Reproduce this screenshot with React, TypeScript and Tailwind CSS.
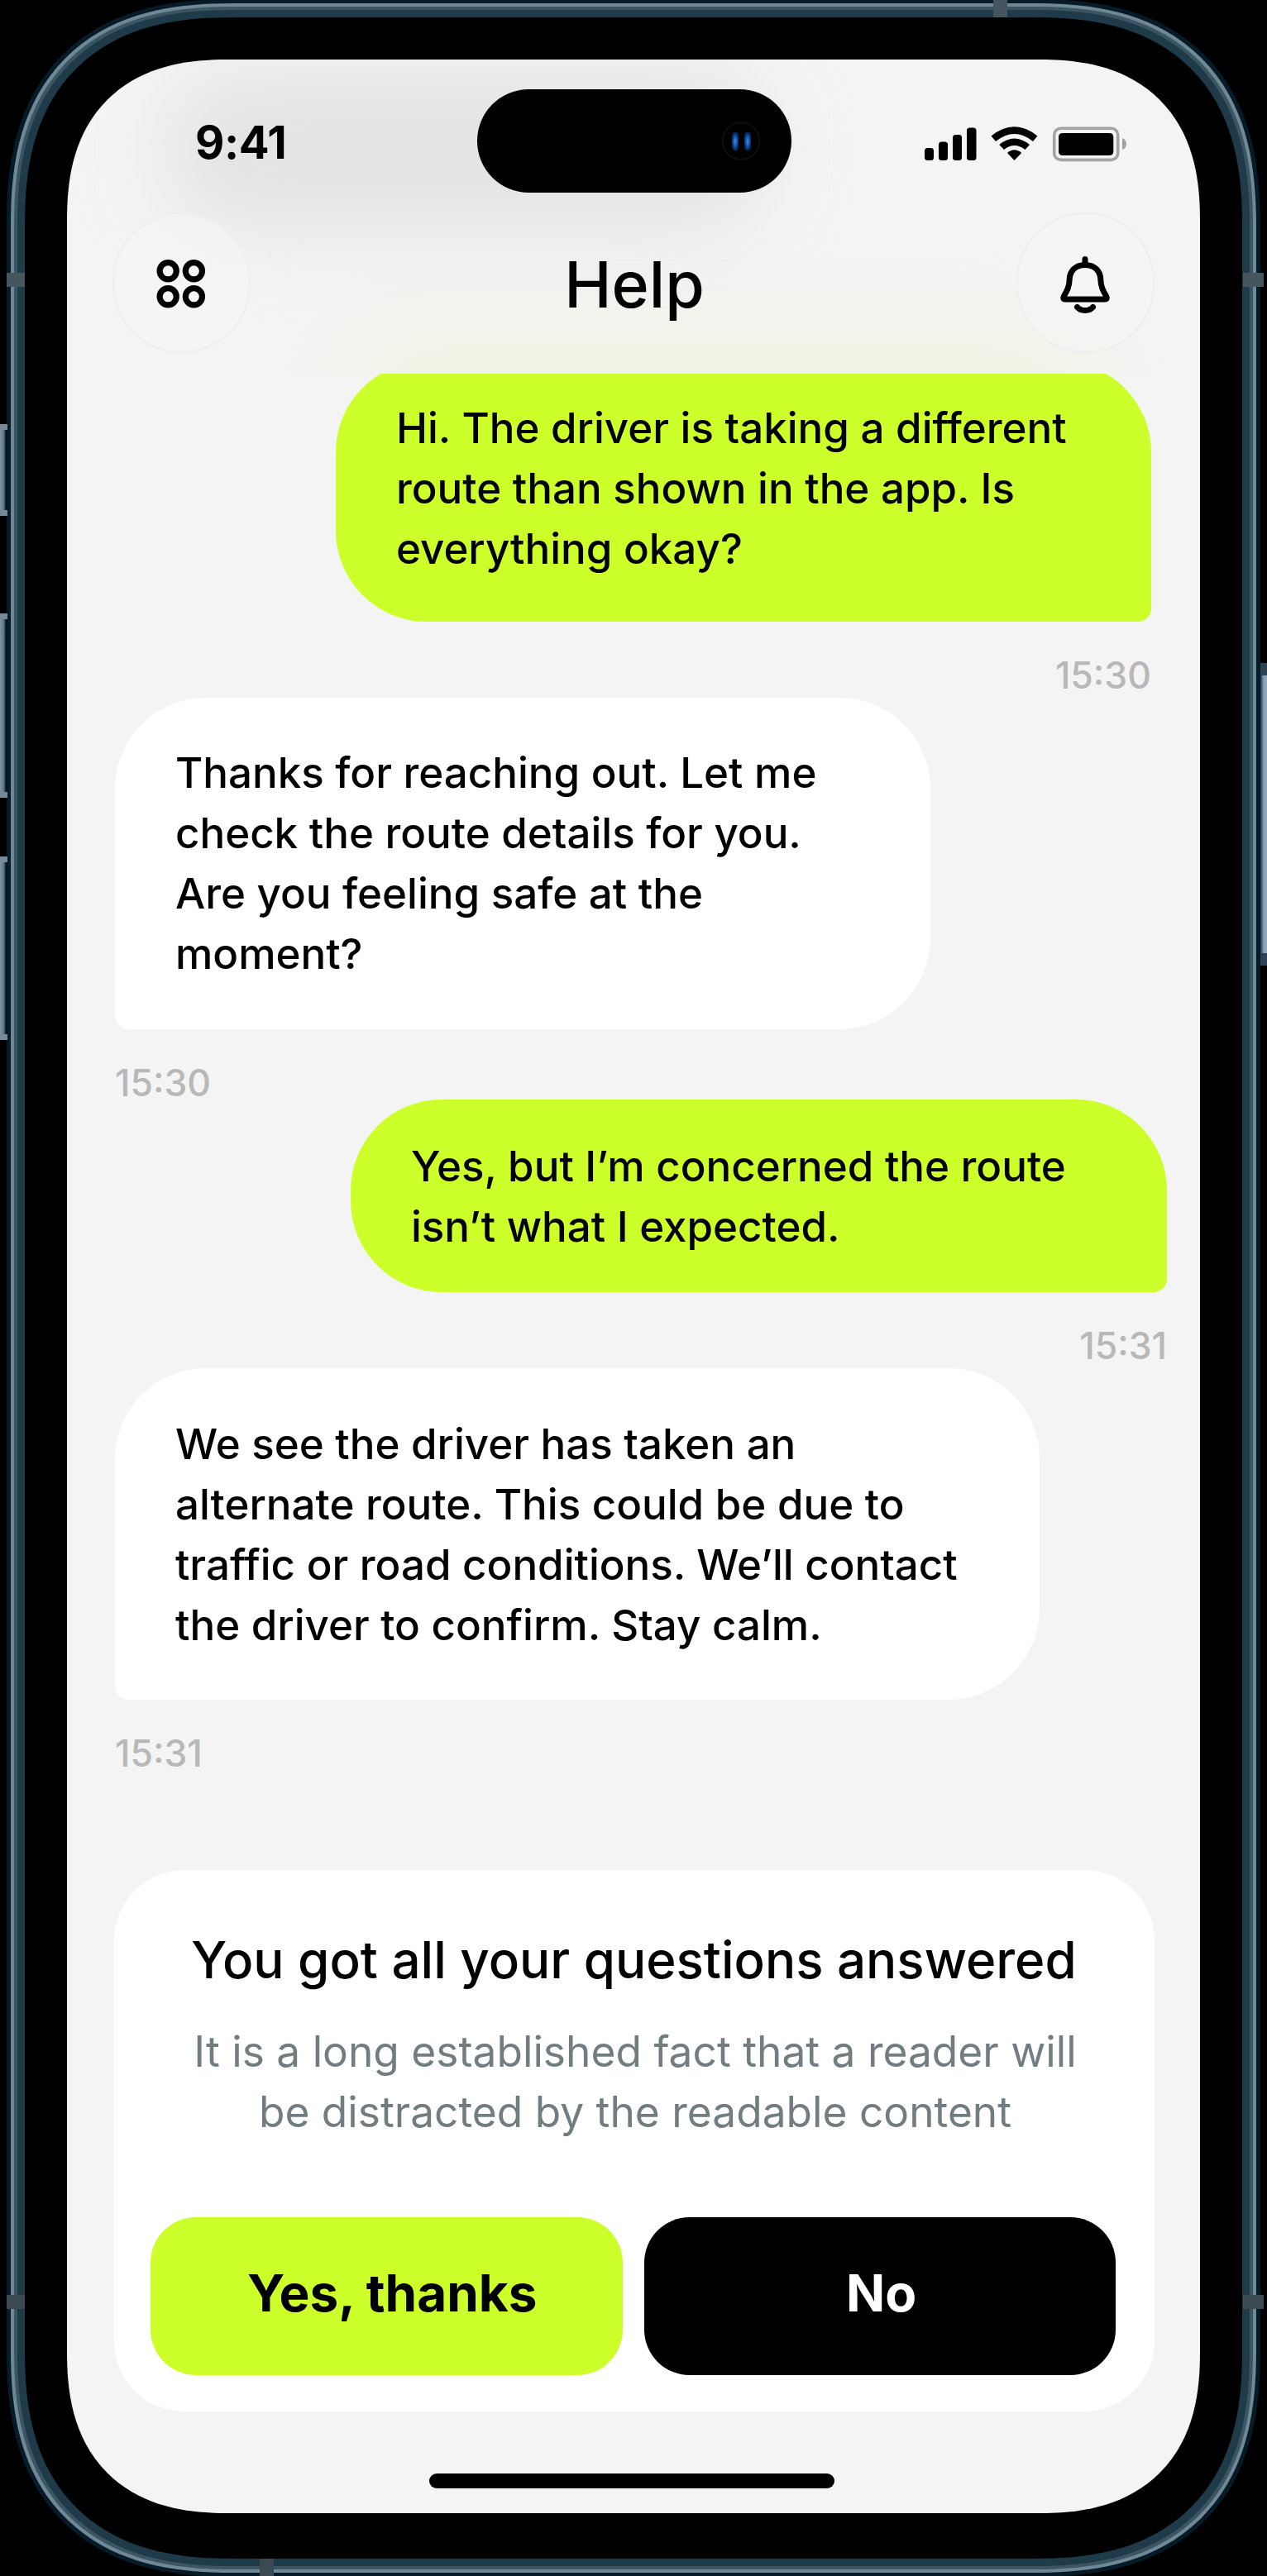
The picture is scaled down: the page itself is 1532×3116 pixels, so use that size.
import React from "react";

type Message = {
  side: "in" | "out";
  lines: string[];
  time: string;
  row: string;
  bubble: string;
};

const chat: Message[] = [
  {
    side: "out",
    lines: ["Hi. The driver is taking a different", "route than shown in the app. Is", "everything okay?"],
    time: "15:30",
    row: "-mt-[15px] pr-[59px] items-end",
    bubble: "w-[986px] h-[315px] pt-[44px]",
  },
  {
    side: "in",
    lines: ["Thanks for reaching out. Let me", "check the route details for you.", "Are you feeling safe at the", "moment?"],
    time: "15:30",
    row: "mt-[3px] pl-[58px] items-start",
    bubble: "w-[986px] h-[401px] pt-[54px]",
  },
  {
    side: "out",
    lines: ["Yes, but I’m concerned the route", "isn’t what I expected."],
    time: "15:31",
    row: "-mt-[4px] pr-[40px] items-end",
    bubble: "w-[987px] h-[233px] pt-[44px]",
  },
  {
    side: "in",
    lines: ["We see the driver has taken an", "alternate route. This could be due to", "traffic or road conditions. We’ll contact", "the driver to confirm. Stay calm."],
    time: "15:31",
    row: "mt-[3px] pl-[58px] items-start",
    bubble: "w-[1118px] h-[401px] pt-[55px]",
  },
];

function StatusIcons() {
  return (
    <svg width="256" height="52" viewBox="1113 148 256 52">
      <rect x="1118" y="179" width="11" height="15" rx="3.5" />
      <rect x="1135" y="171.5" width="11" height="22.5" rx="3.5" />
      <rect x="1152" y="163" width="11" height="31" rx="3.5" />
      <rect x="1169" y="154.5" width="11.5" height="39.5" rx="3.5" />
      <path d="M1198.5 164.5 Q1226.5 142 1254.5 164.5 L1249 171 Q1226.5 153 1204 171 Z" />
      <path d="M1208.2 175 Q1226.5 160 1245 175 L1239.5 181 Q1226.5 171 1214 181 Z" />
      <path d="M1218 185 Q1226.5 177.5 1235.2 185 L1226.5 194 Z" />
      <rect x="1274.7" y="155.2" width="77" height="38.2" rx="8" fill="none" stroke="#a3a3a3" strokeWidth="3.6" />
      <rect x="1280" y="161" width="66.3" height="27" rx="4.5" />
      <path d="M1357 167 C1360 168 1362 171 1362 174.2 C1362 177.5 1360 180 1357 181.2 Z" fill="#a3a3a3" />
    </svg>
  );
}

function Lens() {
  return <span className="h-[22px] w-[8px] rounded-full bg-[radial-gradient(ellipse,#2f86d8_10%,#0b3b86_55%,#00061c_100%)]" />;
}

function Island() {
  return (
    <div className="flex h-[125px] w-[380px] items-center justify-end rounded-full bg-black pr-[38px]">
      <div className="flex h-[47px] w-[46px] items-center justify-center gap-[7px] rounded-full border-2 border-[#0e0e0e]">
        <Lens />
        <Lens />
      </div>
    </div>
  );
}

function RoundButton({ children }: { children: React.ReactNode }) {
  return (
    <button className="flex h-[170px] w-[167px] items-center justify-center rounded-full border-2 border-[#eeeeee] bg-[#f6f6f6]/50">
      {children}
    </button>
  );
}

function Header() {
  return (
    <header className="relative flex h-[380px] shrink-0 flex-col overflow-hidden">
      <div className="absolute top-[20px] left-[120px] h-[180px] w-[720px] rounded-full bg-[#dcdcdc]/75 blur-[50px]" />
      <div className="absolute top-[340px] left-[340px] h-[140px] w-[900px] rounded-full bg-[#e6f5c8]/50 blur-[60px]" />
      <div className="relative flex h-[149px] items-start pt-[36px]">
        <div className="w-[496px] pt-[31px] pl-[155px] text-[54.5px] leading-[66px] font-bold tracking-[-0.4px]">9:41</div>
        <Island />
        <div className="pt-[40px] pl-[156px]">
          <StatusIcons />
        </div>
      </div>
      <div className="relative flex items-center justify-between px-[55px] pt-[36px]">
        <RoundButton>
          <svg className="mt-[2px] mr-[2px]" width="64" height="64" viewBox="0 0 64 64" fill="none" stroke="black" strokeWidth="7.2">
            <circle cx="16.2" cy="16.8" r="10.1" />
            <circle cx="47.4" cy="16.8" r="10.1" />
            <circle cx="16.2" cy="47.8" r="10.1" />
            <circle cx="47.4" cy="47.8" r="10.1" />
          </svg>
        </RoundButton>
        <h1 className="pt-[4px] pl-[2px] text-[77px] leading-[94px] font-medium">Help</h1>
        <RoundButton>
          <svg
            className="mt-[6px]"
            width="66"
            height="76"
            viewBox="1279 307 66 76"
            fill="none"
            stroke="black"
            strokeWidth="7"
            strokeLinecap="round"
            strokeLinejoin="round"
          >
            <path d="M1312 313.5 V319" />
            <path d="M1312 320.5 C1300 320.5 1293.5 328 1293.2 338 C1293 347 1290 352 1286.5 358 Q1284.5 362 1288 362 H1336 Q1339.5 362 1337.5 358 C1334 352 1331 347 1330.8 338 C1330.5 328 1324 320.5 1312 320.5 Z" />
            <path d="M1302.5 371.5 Q1306 375.5 1312 375.5 Q1318 375.5 1321.5 371.5" />
          </svg>
        </RoundButton>
      </div>
    </header>
  );
}

function Bubble({ message }: { message: Message }) {
  return (
    <div className={`flex shrink-0 flex-col gap-[41px] ${message.row}`}>
      <div
        className={`${message.bubble} shrink-0 pl-[73px] text-[51.05px] leading-[73px] font-medium whitespace-nowrap ${
          message.side === "out" ? "rounded-[110px] rounded-br-[16px] bg-[#cdff2a]" : "rounded-[110px] rounded-bl-[16px] bg-white"
        }`}
      >
        {message.lines.map((line) => (
          <div key={line}>{line}</div>
        ))}
      </div>
      <time className="h-[48px] text-[44.5px] leading-[48px] font-medium text-[#b8b8b8]">{message.time}</time>
    </div>
  );
}

function SurveyCard() {
  return (
    <section className="ml-[57px] flex h-[655px] w-[1258px] shrink-0 flex-col rounded-[85px] bg-white pr-[47px] pl-[44px] text-center">
      <h2 className="pt-[69px] pl-[2px] text-[61.9px] leading-[80px] font-medium whitespace-nowrap">You got all your questions answered</h2>
      <p className="pt-[34px] pl-[5px] text-[51.45px] leading-[73px] whitespace-nowrap text-[#727d82]">
        It is a long established fact that a reader will
        <br />
        be distracted by the readable content
      </p>
      <div className="grid grid-cols-2 gap-[26px] pt-[91px] text-[62px] leading-[74px] font-bold">
        <button className="h-[191px] rounded-[55px] bg-[#cdff2a] pb-[7px] pl-[14px]">Yes, thanks</button>
        <button className="h-[191px] rounded-[55px] bg-black pb-[7px] pl-[4px] text-white">No</button>
      </div>
    </section>
  );
}

function SideKey({ size }: { size: string }) {
  return (
    <div className={`${size} w-[9px] border-y-[7px] border-[#74899a] bg-[linear-gradient(to_right,#7f95a2,#5b7382_55%,#061b27_75%)]`} />
  );
}

export default function App() {
  return (
    <div className="relative h-[3116px] w-[1532px] overflow-hidden bg-black px-[8px] font-['Inter',sans-serif] text-black">
      <div className="-mt-px h-[3118px] rounded-[275px] bg-[#061b27] p-[5px] [corner-shape:superellipse(1.3)]">
        <div className="h-full rounded-[270px] bg-[#6f8896] p-[4px] [corner-shape:superellipse(1.3)]">
          <div className="h-full rounded-[266px] bg-[#3b5563] p-[4px] [corner-shape:superellipse(1.3)]">
            <div className="h-full rounded-[262px] bg-[#1f3a48] p-[9px] [corner-shape:superellipse(1.3)]">
              <div className="h-full rounded-[253px] bg-black px-[51px] pt-[51px] [corner-shape:superellipse(1.3)]">
                <main className="flex h-[2968px] flex-col overflow-hidden rounded-[195px] bg-[#f4f4f4] [corner-shape:superellipse(1.27)]">
                  <Header />
                  <section className="flex h-[1810px] shrink-0 flex-col overflow-hidden">
                    {chat.map((message, i) => (
                      <Bubble key={i} message={message} />
                    ))}
                  </section>
                  <SurveyCard />
                  <div className="mt-[75px] ml-[438px] h-[18px] w-[490px] shrink-0 rounded-full bg-black" />
                </main>
              </div>
            </div>
          </div>
        </div>
      </div>

      <div className="absolute top-[513px] left-0 flex flex-col">
        <SideKey size="h-[111px] mb-[118px]" />
        <SideKey size="h-[223px] mb-[71px]" />
        <SideKey size="h-[222px]" />
      </div>
      <div className="absolute top-[802px] right-0 h-[366px] w-[8px] border-y-[15px] border-[#2d4252] bg-[linear-gradient(to_right,#1b3342,#86a2b5_50%,#8fabbd)]" />

      <div className="absolute inset-x-0 top-[330px] flex justify-between pr-[4px] pl-[8px]">
        <span className="h-[17px] w-[22px] bg-[#46565f]" />
        <span className="h-[17px] w-[25px] bg-[#46565f]" />
      </div>
      <div className="absolute inset-x-0 top-[2776px] flex justify-between pr-[4px] pl-[8px]">
        <span className="h-[17px] w-[22px] bg-[#3b4a50]" />
        <span className="h-[17px] w-[25px] bg-[#3b4a50]" />
      </div>
      <div className="absolute top-0 left-[1201px] h-[21px] w-[17px] bg-[#46565f]" />
      <div className="absolute bottom-0 left-[314px] h-[21px] w-[17px] bg-[#3b4a50]" />
    </div>
  );
}
